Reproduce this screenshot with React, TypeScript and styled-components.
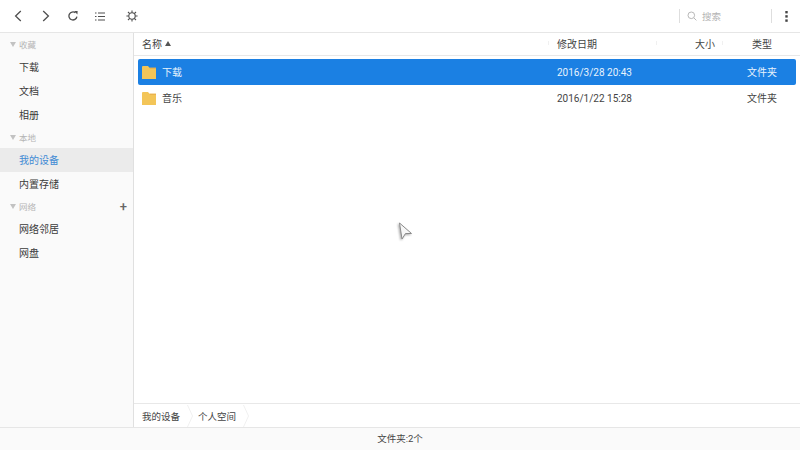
import React from 'react';
import styled, { createGlobalStyle } from 'styled-components';

const GlobalStyle = createGlobalStyle`
  html, body {
    margin: 0;
    padding: 0;
    background: #fff;
  }
  body {
    font-family: 'Roboto', 'Noto Sans CJK SC', sans-serif;
  }
`;

const Page = styled.div`
  position: relative;
  display: flex;
  flex-direction: column;
  width: 800px;
  height: 450px;
  overflow: hidden;
  background: #fff;
  color: #3a3a3a;
`;

const Toolbar = styled.div`
  display: flex;
  align-items: center;
  flex: 0 0 33px;
  box-sizing: border-box;
  padding-left: 9px;
  border-bottom: 1px solid #e6e6e6;
`;

const ToolButton = styled.div<{ $width: number }>`
  display: flex;
  align-items: center;
  justify-content: center;
  width: ${p => p.$width}px;
  color: #4f4f4f;
`;

const SearchBox = styled.div`
  display: flex;
  align-items: center;
  margin-left: auto;
  width: 93px;
  height: 14px;
  box-sizing: border-box;
  padding-left: 7px;
  gap: 5px;
  border-left: 1px solid #dedede;
  border-right: 1px solid #dedede;
  font-size: 9.5px;
  color: #b4b4b4;
`;

const MoreButton = styled.div`
  display: flex;
  justify-content: center;
  width: 28px;
  color: #444;
`;

const Main = styled.div`
  display: flex;
  flex: 1;
  min-height: 0;
`;

const Sidebar = styled.div`
  display: flex;
  flex-direction: column;
  flex: 0 0 134px;
  box-sizing: border-box;
  padding-top: 1px;
  background: #fafafa;
  border-right: 1px solid #e0e0e0;
`;

const GroupTitle = styled.div`
  display: flex;
  align-items: center;
  height: 20px;
  margin-bottom: 1px;
  padding: 0 6px 0 10px;
  gap: 3px;
  font-size: 8.5px;
  color: #b5b5b5;
`;

const Triangle = styled.span`
  width: 0;
  height: 0;
  border-left: 3px solid transparent;
  border-right: 3px solid transparent;
  border-top: 5px solid #c2c2c2;
`;

const Plus = styled.span`
  margin-left: auto;
  font-size: 13px;
  line-height: 13px;
  font-weight: 500;
  color: #666;
`;

const SideItem = styled.div<{ $active?: boolean }>`
  display: flex;
  align-items: center;
  box-sizing: border-box;
  height: 24px;
  padding: 0 0 2px 19px;
  font-size: 10px;
  background: ${p => (p.$active ? '#ebebeb' : 'transparent')};
  color: ${p => (p.$active ? '#3f8ad4' : '#3a3a3a')};
`;

const Content = styled.div`
  display: flex;
  flex-direction: column;
  flex: 1;
  min-width: 0;
`;

const HeaderRow = styled.div`
  display: grid;
  grid-template-columns: 415px 138px 57px 1fr;
  align-items: center;
  flex: 0 0 23px;
  box-sizing: border-box;
  padding: 0 0 2px 8px;
  border-bottom: 1px solid #e8e8e8;
  font-size: 10px;
  color: #444;
`;

const HeaderCell = styled.div<{ $tick?: number }>`
  position: relative;
  display: flex;
  align-items: center;
  gap: 3px;

  ${p =>
    p.$tick
      ? `&::before {
    content: '';
    position: absolute;
    left: -${p.$tick}px;
    top: 5px;
    width: 1px;
    height: 4px;
    background: #f0f0f0;
  }`
      : ''}
`;

const SortMark = styled.span`
  width: 0;
  height: 0;
  border-left: 3px solid transparent;
  border-right: 3px solid transparent;
  border-bottom: 5px solid #555;
`;

const List = styled.div`
  display: flex;
  flex-direction: column;
  flex: 1;
  padding: 3px 4px 0;
`;

const Row = styled.div<{ $selected?: boolean }>`
  display: grid;
  grid-template-columns: 20px 395px 190px 1fr;
  align-items: center;
  height: 26px;
  padding-left: 4px;
  border-radius: 2px;
  font-size: 10px;
  background: ${p => (p.$selected ? '#1b80e3' : 'transparent')};
  color: ${p => (p.$selected ? '#e8f3fd' : '#444')};
`;

const CjkCell = styled.div`
  padding-bottom: 2px;
`;

const Breadcrumbs = styled.div`
  display: flex;
  align-items: center;
  flex: 0 0 24px;
  box-sizing: border-box;
  padding-left: 8px;
  border-top: 1px solid #e8e8e8;
  font-size: 9.5px;
  color: #444;
`;

const Crumb = styled.div`
  display: flex;
  align-items: center;
  gap: 7px;
  margin-right: 5px;
`;

const StatusBar = styled.div`
  display: flex;
  align-items: center;
  justify-content: center;
  flex: 0 0 23px;
  box-sizing: border-box;
  padding-bottom: 2px;
  background: #fafafa;
  border-top: 1px solid #e6e6e6;
  font-size: 9.5px;
  color: #444;
`;

const Pointer = styled.svg`
  position: absolute;
  left: 398px;
  top: 222px;
  filter: drop-shadow(-1px 1px 1px rgba(0, 0, 0, 0.35));
`;

const Back = () => (
  <svg width="8" height="12" viewBox="0 0 8 12" fill="none" stroke="currentColor" strokeWidth="1.3">
    <path d="M6.8 1 L1.6 6 L6.8 11" />
  </svg>
);

const Forward = () => (
  <svg width="8" height="12" viewBox="0 0 8 12" fill="none" stroke="currentColor" strokeWidth="1.3">
    <path d="M1.2 1 L6.4 6 L1.2 11" />
  </svg>
);

const Reload = () => (
  <svg width="10" height="10" viewBox="0 0 10 10" fill="none" stroke="currentColor" strokeWidth="1.3">
    <path d="M8.9 5.6 A4 4 0 1 1 7.4 1.8" />
    <path d="M6.2 0 L9.6 0 L9.4 3.6 Z" fill="currentColor" stroke="none" />
  </svg>
);

const ListIcon = () => (
  <svg width="10" height="9" viewBox="0 0 10 9" stroke="currentColor" strokeWidth="1">
    <path d="M0 1 H1.5 M3 1 H10 M0 4.5 H1.5 M3 4.5 H10 M0 8 H1.5 M3 8 H10" />
  </svg>
);

const Gear = () => (
  <svg width="12" height="12" viewBox="0 0 12 12" fill="none" stroke="currentColor" strokeWidth="1.1">
    <circle cx="6" cy="6" r="3.2" />
    <path d="M6 0.4 V2.8 M6 9.2 V11.6 M0.4 6 H2.8 M9.2 6 H11.6 M2 2 L3.7 3.7 M8.3 8.3 L10 10 M10 2 L8.3 3.7 M3.7 8.3 L2 10" />
  </svg>
);

const SearchIcon = () => (
  <svg width="10" height="10" viewBox="0 0 10 10" fill="none" stroke="#b8b8b8" strokeWidth="1">
    <circle cx="4.3" cy="4.3" r="3.3" />
    <path d="M6.8 6.8 L9.4 9.4" />
  </svg>
);

const More = () => (
  <svg width="3" height="11" viewBox="0 0 3 11" fill="currentColor">
    <rect x="0.3" y="0" width="2.4" height="2.4" />
    <rect x="0.3" y="4.2" width="2.4" height="2.4" />
    <rect x="0.3" y="8.4" width="2.4" height="2.4" />
  </svg>
);

const Folder = () => (
  <svg width="14" height="13" viewBox="0 0 14 13">
    <path d="M0 1 Q0 0 1 0 H6 L7.5 1.8 H14 V13 H0 Z" fill="#f3c558" />
    <path d="M7.5 1.8 H14 V2.6 H8 Z" fill="#e2a243" />
  </svg>
);

const Chevron = () => (
  <svg width="6" height="22" viewBox="0 0 6 22" fill="none" stroke="#f0f0f0" strokeWidth="1">
    <path d="M0.5 0 L5.5 11 L0.5 22" />
  </svg>
);

const CursorArrow = () => (
  <Pointer width="16" height="19" viewBox="0 0 16 19">
    <path d="M1.5 1 L13.5 11.5 L7.5 11.5 L4 17 Z" fill="#f6f6f6" stroke="#8a8a8a" strokeWidth="1" />
  </Pointer>
);

const files = [
  { name: '下载', date: '2016/3/28 20:43', type: '文件夹', selected: true },
  { name: '音乐', date: '2016/1/22 15:28', type: '文件夹', selected: false },
];

const App: React.FC = () => (
  <Page>
    <GlobalStyle />
    <Toolbar>
      <ToolButton $width={18}><Back /></ToolButton>
      <ToolButton $width={37}><Forward /></ToolButton>
      <ToolButton $width={18}><Reload /></ToolButton>
      <ToolButton $width={36}><ListIcon /></ToolButton>
      <ToolButton $width={28}><Gear /></ToolButton>
      <SearchBox>
        <SearchIcon />
        搜索
      </SearchBox>
      <MoreButton><More /></MoreButton>
    </Toolbar>
    <Main>
      <Sidebar>
        <GroupTitle><Triangle />收藏</GroupTitle>
        <SideItem>下载</SideItem>
        <SideItem>文档</SideItem>
        <SideItem>相册</SideItem>
        <GroupTitle><Triangle />本地</GroupTitle>
        <SideItem $active>我的设备</SideItem>
        <SideItem>内置存储</SideItem>
        <GroupTitle><Triangle />网络<Plus>+</Plus></GroupTitle>
        <SideItem>网络邻居</SideItem>
        <SideItem>网盘</SideItem>
      </Sidebar>
      <Content>
        <HeaderRow>
          <HeaderCell>名称<SortMark /></HeaderCell>
          <HeaderCell $tick={9}>修改日期</HeaderCell>
          <HeaderCell $tick={39}>大小</HeaderCell>
          <HeaderCell $tick={30}>类型</HeaderCell>
        </HeaderRow>
        <List>
          {files.map(file => (
            <Row key={file.name} $selected={file.selected}>
              <Folder />
              <CjkCell>{file.name}</CjkCell>
              <div>{file.date}</div>
              <CjkCell>{file.type}</CjkCell>
            </Row>
          ))}
        </List>
        <Breadcrumbs>
          <Crumb>我的设备<Chevron /></Crumb>
          <Crumb>个人空间<Chevron /></Crumb>
        </Breadcrumbs>
      </Content>
    </Main>
    <StatusBar>文件夹:2个</StatusBar>
    <CursorArrow />
  </Page>
);

export default App;
